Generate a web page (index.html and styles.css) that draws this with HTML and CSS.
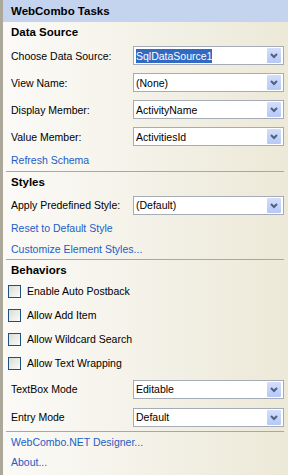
FILE: index.html
```html
<!DOCTYPE html>
<html lang="en">
<head>
<meta charset="UTF-8">
<meta name="viewport" content="width=device-width, initial-scale=1.0">
<title>WebCombo Tasks</title>
<link rel="stylesheet" href="styles.css">
</head>
<body>

<div class="panel">
    <div class="header">WebCombo Tasks</div>

    <div class="title first">Data Source</div>
    <div class="field">
        <span class="label">Choose Data Source:</span>
        <div class="combo">
            <span class="value"><span class="sel">SqlDataSource1</span></span>
            <span class="arrow"><svg width="14" height="15" viewBox="0 0 14 15"><path d="M4 6 L7 9 L10 6" fill="none" stroke="#4d6185" stroke-width="2"/></svg></span>
        </div>
    </div>
    <div class="field">
        <span class="label">View Name:</span>
        <div class="combo">
            <span class="value">(None)</span>
            <span class="arrow"><svg width="14" height="15" viewBox="0 0 14 15"><path d="M4 6 L7 9 L10 6" fill="none" stroke="#4d6185" stroke-width="2"/></svg></span>
        </div>
    </div>
    <div class="field">
        <span class="label">Display Member:</span>
        <div class="combo">
            <span class="value">ActivityName</span>
            <span class="arrow"><svg width="14" height="15" viewBox="0 0 14 15"><path d="M4 6 L7 9 L10 6" fill="none" stroke="#4d6185" stroke-width="2"/></svg></span>
        </div>
    </div>
    <div class="field">
        <span class="label">Value Member:</span>
        <div class="combo">
            <span class="value">ActivitiesId</span>
            <span class="arrow"><svg width="14" height="15" viewBox="0 0 14 15"><path d="M4 6 L7 9 L10 6" fill="none" stroke="#4d6185" stroke-width="2"/></svg></span>
        </div>
    </div>
    <a class="link refresh" href="#">Refresh Schema</a>

    <div class="sep"></div>

    <div class="title">Styles</div>
    <div class="field short">
        <span class="label">Apply Predefined Style:</span>
        <div class="combo">
            <span class="value">(Default)</span>
            <span class="arrow"><svg width="14" height="15" viewBox="0 0 14 15"><path d="M4 6 L7 9 L10 6" fill="none" stroke="#4d6185" stroke-width="2"/></svg></span>
        </div>
    </div>
    <a class="link reset" href="#">Reset to Default Style</a>
    <a class="link" href="#">Customize Element Styles...</a>

    <div class="sep"></div>

    <div class="title last">Behaviors</div>
    <label class="check"><span class="box"></span>Enable Auto Postback</label>
    <label class="check"><span class="box"></span>Allow Add Item</label>
    <label class="check"><span class="box"></span>Allow Wildcard Search</label>
    <label class="check"><span class="box"></span>Allow Text Wrapping</label>
    <div class="field tall">
        <span class="label">TextBox Mode</span>
        <div class="combo">
            <span class="value">Editable</span>
            <span class="arrow"><svg width="14" height="15" viewBox="0 0 14 15"><path d="M4 6 L7 9 L10 6" fill="none" stroke="#4d6185" stroke-width="2"/></svg></span>
        </div>
    </div>
    <div class="field tall">
        <span class="label">Entry Mode</span>
        <div class="combo">
            <span class="value">Default</span>
            <span class="arrow"><svg width="14" height="15" viewBox="0 0 14 15"><path d="M4 6 L7 9 L10 6" fill="none" stroke="#4d6185" stroke-width="2"/></svg></span>
        </div>
    </div>

    <div class="sep"></div>

    <a class="link" href="#">WebCombo.NET Designer...</a>
    <a class="link" href="#">About...</a>
</div>

</body>
</html>
```

FILE: styles.css
```css
* { box-sizing: border-box; }
body {
    margin: 0;
    font-family: "Liberation Sans", Arial, sans-serif;
    font-size: 10.5px;
    color: #000;
}
.panel {
    height: 100vh;
    border-left: 3px solid #aca899;
    background: linear-gradient(to right, #fbfaf7, #ece9d8);
    display: flex;
    flex-direction: column;
}
.header {
    height: 22px;
    line-height: 22px;
    padding-left: 8px;
    background-color: #c4d4ef;
    font-weight: bold;
    font-size: 11.5px;
}
.title {
    height: 21px;
    line-height: 21px;
    padding-left: 8px;
    font-weight: bold;
    font-size: 11.5px;
}
.title.first { height: 20px; line-height: 21px; }
.title.last { height: 19px; line-height: 20px; }
.field {
    height: 27px;
    display: flex;
    align-items: center;
    padding: 0 4px 0 8px;
}
.field.short { height: 24px; }
.field.tall { height: 28px; }
.label { width: 122px; flex: none; }
.combo {
    width: 151px;
    height: 19px;
    border: 1px solid #a5acb5;
    background-color: #fff;
    display: flex;
    align-items: center;
    padding-left: 2px;
}
.value { flex: 1; white-space: nowrap; }
.sel {
    background-color: #316ac5;
    color: #fff;
    padding: 1px 0;
}
.arrow {
    width: 14px;
    height: 15px;
    margin-right: 2px;
    background: linear-gradient(#d3defa, #b6c8f6);
    border-radius: 1px;
    display: flex;
}
.link {
    display: block;
    height: 20px;
    line-height: 20px;
    padding-left: 8px;
    color: #215dc6;
    text-decoration: none;
}
.link.refresh { height: 21px; line-height: 21px; }
.link.reset { height: 22px; line-height: 22px; }
.sep {
    height: 1px;
    margin: 0 4px 0 3px;
    background-color: #aca899;
    flex: none;
}
.check {
    height: 24px;
    display: flex;
    align-items: center;
    padding-left: 5px;
}
.box {
    width: 13px;
    height: 13px;
    border: 1px solid #1c5180;
    background: linear-gradient(135deg, #dcdcd5, #fbfbf9);
    margin-right: 6px;
}
```
